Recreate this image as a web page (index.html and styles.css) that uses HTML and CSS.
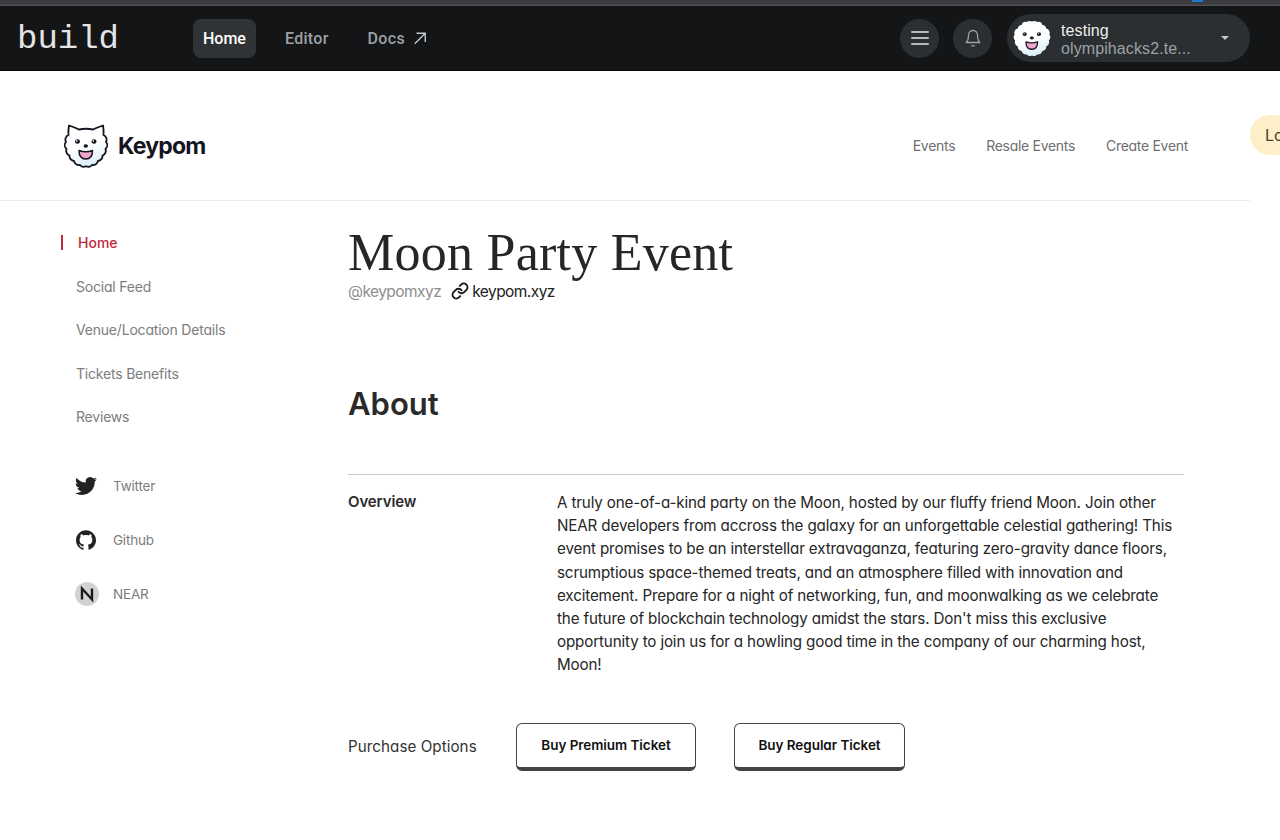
FILE: index.html
```html
<!DOCTYPE html>
<html lang="en">
<head>
    <meta charset="UTF-8">
    <meta name="viewport" content="width=device-width, initial-scale=1.0">
    <title>Moon Party Event</title>
    <link rel="stylesheet" href="styles.css">
</head>
<body>
    <svg class="defs" width="0" height="0">
        <defs>
            <linearGradient id="fur" x1="0.2" y1="0.2" x2="0.5" y2="1">
                <stop offset="0.45" stop-color="#ffffff"/>
                <stop offset="1" stop-color="#dcf0fa"/>
            </linearGradient>
            <g id="dog-face">
                <ellipse cx="13.5" cy="17.5" rx="2.5" ry="2.2" fill="#15151f"/>
                <ellipse cx="30" cy="17.5" rx="2.5" ry="2.2" fill="#15151f"/>
                <circle cx="12.8" cy="16.9" r="0.8" fill="#fff"/>
                <circle cx="29.3" cy="16.9" r="0.8" fill="#fff"/>
                <ellipse cx="21.8" cy="22" rx="2.2" ry="1.7" fill="#15151f"/>
                <path d="M15 26.5 Q21.8 29 28.5 26.5 Q28.5 35 21.8 35 Q15 35 15 26.5 Z" fill="#f3a6cb" stroke="#15151f" stroke-width="1.5" stroke-linejoin="round"/>
            </g>
            <symbol id="dog" viewBox="0 0 44 44">
                <path fill="url(#fur)" stroke="#15151f" stroke-width="1.8" stroke-linejoin="round" d="M5 1.5 Q11 3.5 15 5.5 Q22 4 29 5.5 Q33 3.5 39 1.5 Q39.8 6 39.5 11 A5 5 0 0 1 42 18 A5 5 0 0 1 41.5 25 A5 5 0 0 1 38.5 31.5 A5 5 0 0 1 34 37 A5 5 0 0 1 28 41 A5 5 0 0 1 22 42.3 A5 5 0 0 1 16 41 A5 5 0 0 1 10 37 A5 5 0 0 1 5.5 31.5 A5 5 0 0 1 2.5 25 A5 5 0 0 1 2 18 A5 5 0 0 1 4.5 11 Q4.2 6 5 1.5 Z"/>
                <use href="#dog-face"/>
            </symbol>
            <symbol id="dog-round" viewBox="0 0 44 44">
                <path fill="url(#fur)" d="M10 7 A5 5 0 0 1 16 3.5 A6 6 0 0 1 22 3 A6 6 0 0 1 28 3.5 A5 5 0 0 1 34 7 A5 5 0 0 1 38.5 11 A5 5 0 0 1 42 18 A5 5 0 0 1 41.5 25 A5 5 0 0 1 38.5 31.5 A5 5 0 0 1 34 37 A5 5 0 0 1 28 41 A5 5 0 0 1 22 42.3 A5 5 0 0 1 16 41 A5 5 0 0 1 10 37 A5 5 0 0 1 5.5 31.5 A5 5 0 0 1 2.5 25 A5 5 0 0 1 2 18 A5 5 0 0 1 5.5 11 A5 5 0 0 1 10 7 Z"/>
                <use href="#dog-face"/>
            </symbol>
        </defs>
    </svg>

    <div class="browser-strip"><span class="strip-tab"></span></div>

    <header class="topnav">
        <a class="build-logo">build</a>
        <nav class="topnav-links">
            <a class="topnav-link active">Home</a>
            <a class="topnav-link">Editor</a>
            <a class="topnav-link">Docs
                <svg class="docs-arrow" width="14" height="14" viewBox="0 0 16 16" fill="none" stroke="#c4c8ca" stroke-width="1.6"><path d="M2 14.5 14 2.5M4 2.5H14V12.5"/></svg>
            </a>
        </nav>
        <div class="topnav-right">
            <button class="round-btn">
                <svg width="20" height="16" viewBox="0 0 20 16" fill="none" stroke="#b4b8bb" stroke-width="2" stroke-linecap="round"><path d="M2 2h16M2 8h16M2 14h16"/></svg>
            </button>
            <button class="round-btn">
                <svg width="18" height="20" viewBox="0 0 24 26" fill="none" stroke="#9ba1a6" stroke-width="1.7" stroke-linejoin="round" stroke-linecap="round"><path d="M18 9A6 6 0 0 0 6 9c0 7-3 10-3 10h18s-3-3-3-10"/><path d="M13.7 23a2 2 0 0 1-3.4 0"/></svg>
            </button>
            <div class="account">
                <svg class="account-avatar" width="38" height="38"><use href="#dog-round"/></svg>
                <div class="account-text">
                    <span class="account-name">testing</span>
                    <span class="account-id">olympihacks2.te...</span>
                </div>
                <span class="caret"></span>
            </div>
        </div>
    </header>

    <div class="page">
        <header class="site-header">
            <a class="brand">
                <svg class="brand-dog" width="44" height="44"><use href="#dog"/></svg>
                <span class="brand-name">Keypom</span>
            </a>
            <nav class="site-links">
                <a>Events</a>
                <a>Resale Events</a>
                <a>Create Event</a>
            </nav>
        </header>

        <div class="layout">
            <aside class="sidebar">
                <ul class="side-menu">
                    <li class="side-item current">Home</li>
                    <li class="side-item">Social Feed</li>
                    <li class="side-item">Venue/Location Details</li>
                    <li class="side-item">Tickets Benefits</li>
                    <li class="side-item">Reviews</li>
                </ul>
                <ul class="social-list">
                    <li class="social-item">
                        <svg class="social-icon" width="22" height="22" viewBox="0 0 24 24" fill="#222"><path d="M23.953 4.57a10 10 0 01-2.825.775 4.958 4.958 0 002.163-2.723c-.951.555-2.005.959-3.127 1.184a4.92 4.92 0 00-8.384 4.482C7.69 8.095 4.067 6.13 1.64 3.162a4.822 4.822 0 00-.666 2.475c0 1.71.87 3.213 2.188 4.096a4.904 4.904 0 01-2.228-.616v.06a4.923 4.923 0 003.946 4.827 4.996 4.996 0 01-2.212.085 4.936 4.936 0 004.604 3.417 9.867 9.867 0 01-6.102 2.105c-.39 0-.779-.023-1.17-.067a13.995 13.995 0 007.557 2.209c9.053 0 13.998-7.496 13.998-13.985 0-.21 0-.42-.015-.63A9.935 9.935 0 0024 4.59z"/></svg>
                        Twitter
                    </li>
                    <li class="social-item">
                        <svg class="social-icon" width="20" height="20" viewBox="0 0 24 24" fill="#222"><path d="M12 .297c-6.63 0-12 5.373-12 12 0 5.303 3.438 9.8 8.205 11.385.6.113.82-.258.82-.577 0-.285-.01-1.04-.015-2.04-3.338.724-4.042-1.61-4.042-1.61C4.422 18.07 3.633 17.7 3.633 17.7c-1.087-.744.084-.729.084-.729 1.205.084 1.838 1.236 1.838 1.236 1.07 1.835 2.809 1.305 3.495.998.108-.776.417-1.305.76-1.605-2.665-.3-5.466-1.332-5.466-5.93 0-1.31.465-2.38 1.235-3.22-.135-.303-.54-1.523.105-3.176 0 0 1.005-.322 3.3 1.23.96-.267 1.98-.399 3-.405 1.02.006 2.04.138 3 .405 2.28-1.552 3.285-1.23 3.285-1.23.645 1.653.24 2.873.12 3.176.765.84 1.23 1.91 1.23 3.22 0 4.61-2.805 5.625-5.475 5.92.42.36.81 1.096.81 2.22 0 1.606-.015 2.896-.015 3.286 0 .315.21.69.825.57C20.565 22.092 24 17.592 24 12.297c0-6.627-5.373-12-12-12"/></svg>
                        Github
                    </li>
                    <li class="social-item">
                        <svg class="social-icon" width="24" height="24" viewBox="0 0 24 24"><circle cx="12" cy="12" r="12" fill="#d2d2d2"/><path d="M7 17.5V6.5l10 11V6.5" fill="none" stroke="#1c1c1c" stroke-width="2.4"/></svg>
                        NEAR
                    </li>
                </ul>
            </aside>

            <main class="content">
                <h1 class="event-title">Moon Party Event</h1>
                <div class="event-meta">
                    <span class="handle">@keypomxyz</span>
                    <a class="site-link">
                        <svg width="18" height="18" viewBox="0 0 24 24" fill="none" stroke="#1a1a1a" stroke-width="2.6" stroke-linecap="round" stroke-linejoin="round"><path d="M10 13a5 5 0 0 0 7.54.54l3-3a5 5 0 0 0-7.07-7.07l-1.72 1.71"/><path d="M14 11a5 5 0 0 0-7.54-.54l-3 3a5 5 0 0 0 7.07 7.07l1.71-1.71"/></svg>
                        keypom.xyz
                    </a>
                </div>

                <h2 class="about-title">About</h2>

                <div class="overview">
                    <h3 class="overview-label">Overview</h3>
                    <p class="overview-text">A truly one-of-a-kind party on the Moon, hosted by our fluffy friend Moon. Join other<br>NEAR developers from accross the galaxy for an unforgettable celestial gathering! This<br>event promises to be an interstellar extravaganza, featuring zero-gravity dance floors,<br>scrumptious space-themed treats, and an atmosphere filled with innovation and<br>excitement. Prepare for a night of networking, fun, and moonwalking as we celebrate<br>the future of blockchain technology amidst the stars. Don't miss this exclusive<br>opportunity to join us for a howling good time in the company of our charming host,<br>Moon!</p>
                </div>

                <div class="purchase">
                    <span class="purchase-label">Purchase Options</span>
                    <button class="ticket-btn premium">Buy Premium Ticket</button>
                    <button class="ticket-btn regular">Buy Regular Ticket</button>
                </div>
            </main>
        </div>
    </div>

    <div class="login-tab">Log in</div>
</body>
</html>
```

FILE: styles.css
```css
* {
    box-sizing: border-box;
    margin: 0;
    padding: 0;
}

html, body {
    height: 840px;
    overflow: hidden;
}

body {
    position: relative;
    background-color: #fff;
    font-family: Inter, "Noto Sans", sans-serif;
    font-feature-settings: "cv11";
    color: #222;
}

ul {
    list-style: none;
}

.defs {
    display: block;
}

/* top of the window + dark nav */
.browser-strip {
    position: relative;
    height: 6px;
    background: linear-gradient(#3d3e40, #3a3b3d 60%, #55565a);
}

.strip-tab {
    position: absolute;
    left: 1192px;
    top: 0;
    width: 11px;
    height: 2px;
    background-color: #1f78d8;
}

.topnav {
    display: flex;
    align-items: center;
    height: 65px;
    padding: 0 30px 0 17px;
    background-color: #141517;
    border-bottom: 1px solid #0a0a0a;
}

.build-logo {
    width: 176px;
    padding-top: 2px;
    font-family: "Liberation Mono", monospace;
    font-size: 34px;
    color: #e4e4e4;
    font-feature-settings: normal;
}

.topnav-links {
    display: flex;
    align-items: center;
    gap: 19px;
}

.topnav-link {
    display: flex;
    align-items: center;
    gap: 8px;
    height: 39px;
    padding: 1px 10px 0;
    border-radius: 8px;
    font-family: Roboto, sans-serif;
    font-size: 16px;
    font-weight: 500;
    letter-spacing: 0.3px;
    color: #9ba1a6;
}

.topnav-link.active {
    background-color: #2f3335;
    letter-spacing: 0;
    color: #fff;
}

.docs-arrow {
    margin-top: -2px;
}

.topnav-right {
    display: flex;
    align-items: center;
    gap: 14px;
    margin-left: auto;
}

.round-btn {
    display: flex;
    align-items: center;
    justify-content: center;
    width: 39px;
    height: 39px;
    border: none;
    border-radius: 50%;
    background-color: #2b2f31;
}

.account {
    display: flex;
    align-items: center;
    width: 243px;
    height: 48px;
    margin-left: 1px;
    padding: 0 21px 0 6px;
    border-radius: 24px;
    background-color: #2b2f31;
    font-family: "Liberation Sans", Arial, sans-serif;
    font-feature-settings: normal;
}

.account-avatar {
    flex: none;
}

.account-text {
    display: flex;
    flex-direction: column;
    margin-left: 10px;
    padding-top: 3px;
    font-size: 16px;
    line-height: 18px;
    letter-spacing: 0.1px;
}

.account-name {
    color: #eceeef;
}

.account-id {
    color: #9ba1a6;
}

.caret {
    margin-left: auto;
    width: 0;
    height: 0;
    border-left: 4.5px solid transparent;
    border-right: 4.5px solid transparent;
    border-top: 4px solid #c2c6c8;
}

/* page */
.page {
    width: 1250px;
}

.site-header {
    display: flex;
    align-items: center;
    justify-content: space-between;
    height: 130px;
    padding: 20px 62px 0 64px;
    border-bottom: 1px solid #ececec;
}

.brand {
    display: flex;
    align-items: center;
    gap: 10px;
}

.brand-name {
    font-size: 23px;
    font-weight: 700;
    letter-spacing: -0.8px;
    color: #15151f;
}

.site-links {
    display: flex;
    gap: 31px;
    font-size: 14px;
    letter-spacing: -0.3px;
    color: #6f6f6f;
}

.layout {
    display: flex;
}

.sidebar {
    flex: none;
    width: 348px;
    padding: 20px 0 0 61px;
}

.side-item {
    height: 43.6px;
    padding-left: 15px;
    line-height: 43.6px;
    font-size: 14px;
    letter-spacing: -0.2px;
    color: #7d7d7d;
}

.side-item.current {
    display: flex;
    align-items: center;
    padding-left: 0;
    font-weight: 500;
    letter-spacing: 0;
    color: #c2293a;
}

.side-item.current::before {
    content: "";
    width: 2px;
    height: 15px;
    margin-right: 15px;
    background-color: #c2293a;
}

.social-list {
    margin-top: 20px;
    margin-left: 14px;
}

.social-item {
    display: flex;
    align-items: center;
    height: 54px;
    font-size: 13.5px;
    letter-spacing: -0.2px;
    color: #7d7d7d;
}

.social-icon {
    flex: none;
    margin-right: auto;
}

.social-list {
    width: 100px;
}

.social-item svg {
    margin-right: 14px;
}

.social-item svg[width="22"] {
    margin-right: 16px;
}

.social-item svg[width="20"] {
    margin-left: 1px;
    margin-right: 17px;
}

.content {
    width: 836px;
    padding-top: 24px;
}

.event-title {
    font-family: "Liberation Serif", serif;
    font-feature-settings: normal;
    font-size: 52px;
    font-weight: 400;
    letter-spacing: 0.25px;
    line-height: 56px;
    color: #262626;
}

.event-meta {
    display: flex;
    align-items: center;
    gap: 10px;
    height: 24px;
    margin-top: -2px;
    font-size: 15.5px;
    letter-spacing: -0.55px;
}

.handle {
    color: #8f8f8f;
}

.site-link {
    display: flex;
    align-items: center;
    gap: 3px;
    color: #222;
}

.about-title {
    margin-top: 81px;
    font-size: 31px;
    font-weight: 600;
    line-height: 40px;
    color: #2a2a2a;
}

.overview {
    display: flex;
    margin-top: 50px;
    padding-top: 16px;
    border-top: 1px solid #c8c8c8;
}

.overview-label {
    flex: none;
    width: 209px;
    font-size: 15px;
    font-weight: 600;
    letter-spacing: -0.1px;
    line-height: 22.4px;
    color: #2a2a2a;
}

.overview-text {
    font-size: 15.2px;
    letter-spacing: -0.15px;
    line-height: 23.2px;
    color: #262626;
}

.purchase {
    display: flex;
    align-items: center;
    margin-top: 46px;
}

.purchase-label {
    width: 168px;
    font-size: 15.2px;
    letter-spacing: 0.05px;
    color: #333;
}

.ticket-btn {
    height: 48px;
    border: 1px solid #444;
    border-bottom: 4px solid #444;
    border-radius: 6px;
    background-color: #fff;
    font-family: inherit;
    font-feature-settings: inherit;
    font-size: 13.5px;
    font-weight: 600;
    letter-spacing: -0.05px;
    color: #111;
}

.premium {
    width: 180px;
}

.regular {
    width: 171px;
    margin-left: 38px;
}

.login-tab {
    position: absolute;
    left: 1250px;
    top: 115px;
    width: 90px;
    height: 40px;
    padding-left: 15px;
    border-radius: 20px;
    background-color: #fdf0c8;
    line-height: 40px;
    font-size: 16px;
    color: #4a4030;
}
```
